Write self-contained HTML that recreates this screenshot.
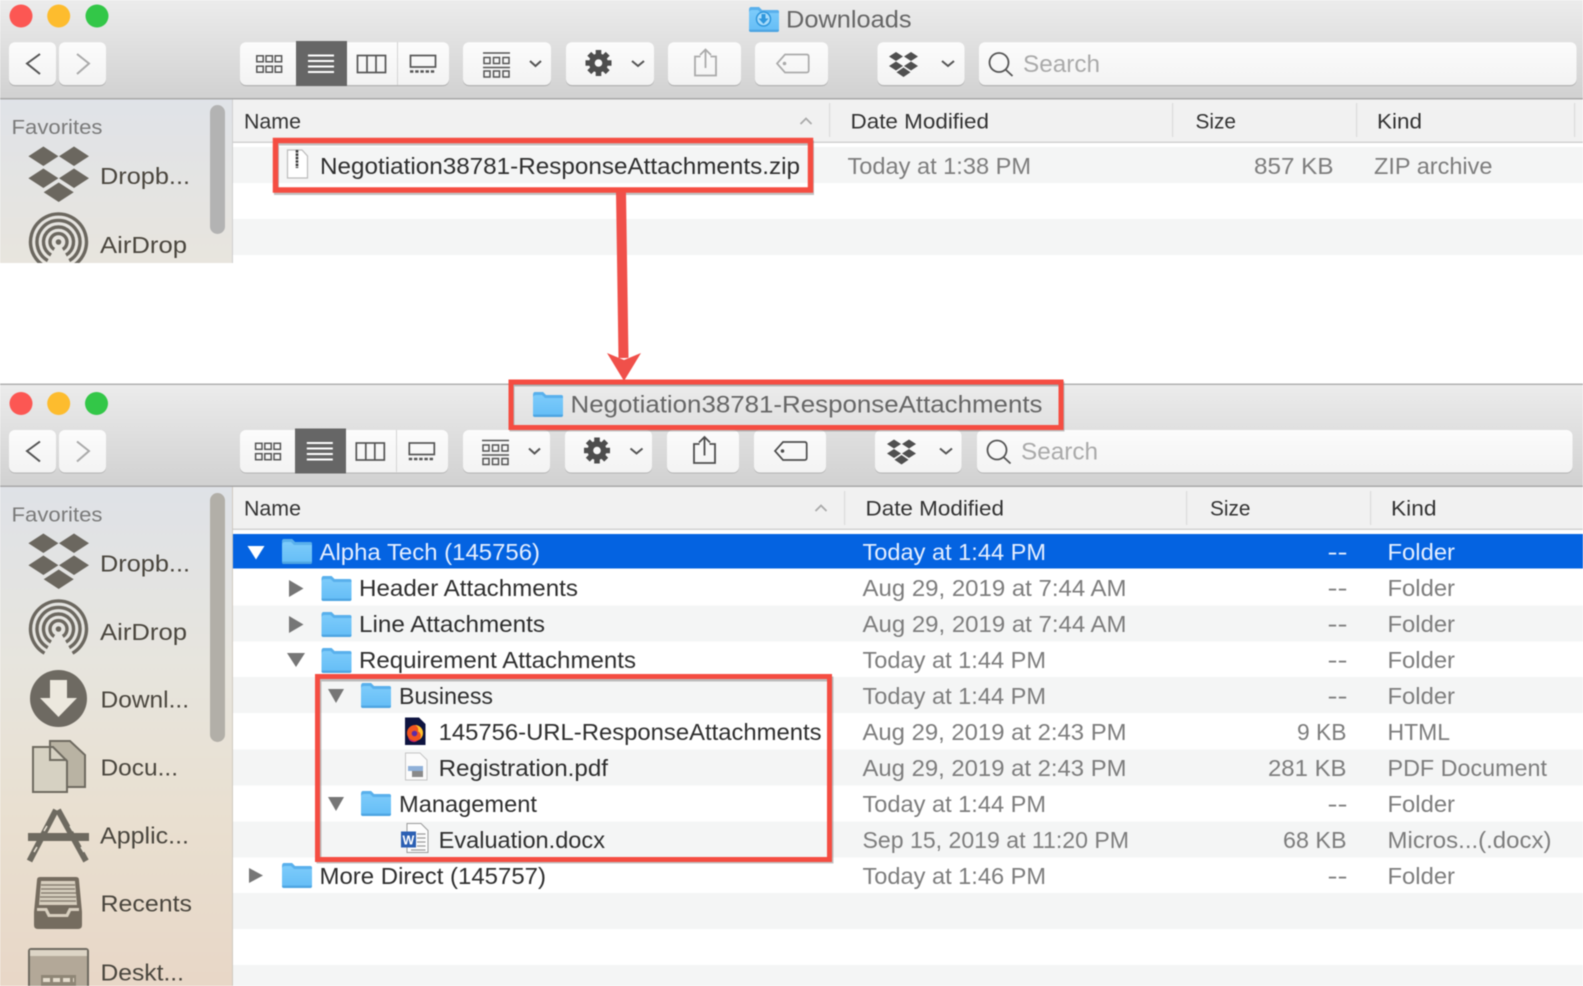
<!DOCTYPE html>
<html><head><meta charset="utf-8"><title>Finder</title>
<style>
html,body{margin:0;padding:0;background:#fff;width:1583px;height:986px;overflow:hidden}
body>svg{display:block;position:absolute;left:0;top:0;filter:blur(.55px)}
text{font-family:"Liberation Sans",sans-serif;white-space:pre}
.r{font-size:23.5px;fill:#2e2e2e}
.d{font-size:23.5px;fill:#7d7d7d}
.w{font-size:23.5px;fill:#e4eeff}
.h{font-size:21.5px;fill:#333}
.s{font-size:23.5px;fill:#4a463e}
.f{font-size:20.5px;fill:#7a7a7a}
.t{font-size:24px;fill:#666}
.q{font-size:24px;fill:#aaa}
</style></head><body>
<svg width="1583" height="986" viewBox="0 0 1583 986" xmlns="http://www.w3.org/2000/svg">
<defs>
<linearGradient id="bar" x1="0" y1="0" x2="0" y2="1"><stop offset="0" stop-color="#ececec"/><stop offset="1" stop-color="#d1d1d1"/></linearGradient>
<linearGradient id="btn" x1="0" y1="0" x2="0" y2="1"><stop offset="0" stop-color="#fcfcfc"/><stop offset="1" stop-color="#f3f3f3"/></linearGradient>
<linearGradient id="sb1" x1="0" y1="0" x2="0" y2="1"><stop offset="0" stop-color="#e0e3e8"/><stop offset="1" stop-color="#e8e5de"/></linearGradient>
<linearGradient id="sb2" x1="0" y1="0" x2="0" y2="1"><stop offset="0" stop-color="#dfe2e7"/><stop offset=".35" stop-color="#e7e5de"/><stop offset=".65" stop-color="#e9e0d1"/><stop offset="1" stop-color="#e8d7c7"/></linearGradient>
<linearGradient id="fold" x1="0" y1="0" x2="0" y2="1"><stop offset="0" stop-color="#80cdfb"/><stop offset="1" stop-color="#64bdf6"/></linearGradient>
<g id="folder">
<path d="M0 4Q0 1 2 1L10 1L13 4L28 4Q30 4 30 6L30 24Q30 26 28 26L2 26Q0 26 0 24Z" fill="url(#fold)"/>
<path d="M0 5Q0 1 2 1L10 1L13 4L28 4Q30 4 30 6L30 7L12 7L9 4L3 4Q0 4 0 7Z" fill="#59b0ec"/>
<path d="M0 24Q0 26 2 26L28 26Q30 26 30 24L30 23.6L0 23.6Z" fill="#4ea5e2"/>
</g>
<g id="box" fill="none" stroke="#555" stroke-width="1.5">
<rect x="256.8" y="55.8" width="6.4" height="6"/><rect x="266" y="55.8" width="6.4" height="6"/><rect x="275.2" y="55.8" width="6.4" height="6"/>
<rect x="256.8" y="66.2" width="6.4" height="6"/><rect x="266" y="66.2" width="6.4" height="6"/><rect x="275.2" y="66.2" width="6.4" height="6"/>
<path d="M308 55.5H334M308 61H334M308 66.5H334M308 72H334" stroke="#fff" stroke-width="2"/>
<rect x="357.5" y="55.5" width="28" height="17" stroke-width="1.7"/><path d="M367 55.5V72.5M376 55.5V72.5" stroke-width="1.7"/>
<rect x="410.5" y="55.5" width="25" height="11.5" stroke-width="1.7"/><path d="M410 71.5H436" stroke-width="2.6" stroke-dasharray="3.4 1.8"/>
</g>
<g id="arr" fill="none" stroke="#555" stroke-width="1.5">
<path d="M483 53H510M483 67.5H510"/>
<rect x="484" y="57.5" width="6" height="6"/><rect x="493.5" y="57.5" width="6" height="6"/><rect x="503" y="57.5" width="6" height="6"/>
<rect x="484" y="71" width="6" height="6"/><rect x="493.5" y="71" width="6" height="6"/><rect x="503" y="71" width="6" height="6"/>
<path d="M530 61L535.5 66L541 61" stroke-width="2"/>
</g>
<g id="gear">
<path d="M598.5 50V76M585.5 63H611.5M589.3 53.8L607.7 72.2M607.7 53.8L589.3 72.2" stroke="#4d4d4d" stroke-width="5.6"/>
<circle cx="598.5" cy="63" r="9.5" fill="#4d4d4d"/>
<circle cx="598.5" cy="63" r="3.8" fill="#f7f7f7"/>
<path d="M632 61L638 66L644 61" fill="none" stroke="#555" stroke-width="2"/>
</g>
<g id="tag"><path d="M806.5 54.5H785L777 63.5L785 72.5H806.5Q808.7 72.5 808.7 70.5V56.5Q808.7 54.5 806.5 54.5Z" fill="none" stroke-width="1.7"/><circle cx="784.5" cy="63.5" r="1.3"/></g>
<g id="share"><path d="M700.5 56.5H695V75.5H716V56.5H710.5M705.5 68V49.5M700 55L705.5 49.5L711 55" fill="none" stroke-width="1.8"/></g>
<g id="dbx" fill="#4f4f4f">
<path d="M896 52L903 56.5L896 61L889 56.5ZM911 52L918 56.5L911 61L904 56.5ZM896 61.5L903 66L896 70.5L889 66ZM911 61.5L918 66L911 70.5L904 66ZM903.5 67.5L910.5 72.3L903.5 77L896.5 72.3Z"/>
<path d="M942 61L948 66L954 61" fill="none" stroke="#555" stroke-width="2"/>
</g>
<g id="mag" fill="none" stroke="#555" stroke-width="1.8"><circle cx="999" cy="62.5" r="9.5"/><path d="M1005.5 69.5L1012.5 76"/></g>
<g id="drop" fill="#6b675f"><path d="M43.4 146.5L58.4 156.2L43.4 166L28.4 156.2ZM74 146.5L89 156.2L74 166L59 156.2ZM43.4 168.5L58.4 178.2L43.4 188L28.4 178.2ZM74 168.5L89 178.2L74 188L59 178.2ZM58.7 182.5L73.7 192.2L58.7 202L43.7 192.2Z"/></g>
<g id="air" fill="none" stroke="#6b675f" stroke-width="3.4">
<path d="M44.5 653.2A28 28 0 1 1 72.5 653.2"/>
<path d="M47.75 647.6A21.5 21.5 0 1 1 69.25 647.6"/>
<path d="M51 642A15 15 0 1 1 66 642"/>
<path d="M54.25 636.4A8.5 8.5 0 1 1 62.75 636.4"/>
<circle cx="58.5" cy="629" r="2.8" fill="#6b675f" stroke="none"/>
</g>
</defs>

<!-- top window -->
<rect width="1583" height="99" fill="url(#bar)"/>
<rect y="98" width="1583" height="1.5" fill="#a9a9a9"/>
<circle cx="21" cy="16" r="11.5" fill="#fc5753"/><circle cx="58.7" cy="16" r="11.5" fill="#fdbc2e"/><circle cx="97" cy="16" r="11.5" fill="#33c748"/>
<use href="#folder" transform="translate(749,6)"/>
<circle cx="763.5" cy="19" r="7" fill="#a8dcfb" stroke="#2f97dd" stroke-width="1.5"/>
<path d="M761.5 14H765.5V18.5H768.5L763.5 24L758.5 18.5H761.5Z" fill="#2f97dd"/>
<text x="786" y="27.5" class="t" textLength="125.5" lengthAdjust="spacingAndGlyphs">Downloads</text>

<g fill="#b4b4b4">
<rect x="9" y="43.2" width="47" height="43" rx="6"/><rect x="59" y="43.2" width="47" height="43" rx="6"/><rect x="240" y="43.2" width="209" height="43" rx="6"/><rect x="463" y="43.2" width="88" height="43" rx="6"/><rect x="566" y="43.2" width="88" height="43" rx="6"/><rect x="668" y="43.2" width="73" height="43" rx="6"/><rect x="755" y="43.2" width="73" height="43" rx="6"/><rect x="877.5" y="43.2" width="87" height="43" rx="6"/><rect x="979" y="43.2" width="597.5" height="43" rx="6"/>
</g>
<g fill="url(#btn)">
<rect x="9" y="42.2" width="47" height="42.8" rx="6"/><rect x="59" y="42.2" width="47" height="42.8" rx="6"/><rect x="240" y="42.2" width="209" height="42.8" rx="6"/><rect x="463" y="42.2" width="88" height="42.8" rx="6"/><rect x="566" y="42.2" width="88" height="42.8" rx="6"/><rect x="668" y="42.2" width="73" height="42.8" rx="6"/><rect x="755" y="42.2" width="73" height="42.8" rx="6"/><rect x="877.5" y="42.2" width="87" height="42.8" rx="6"/><rect x="979" y="42.2" width="597.5" height="42.8" rx="6"/>
</g>
<rect x="296" y="41" width="51" height="45" fill="#666"/>
<rect x="397" y="42" width="1" height="43" fill="#d4d4d4"/>
<path d="M40 54L27 63.5L40 74" fill="none" stroke="#555" stroke-width="2"/>
<path d="M77 54L89 63.5L77 74" fill="none" stroke="#aaa" stroke-width="2"/>
<use href="#box"/><use href="#arr"/><use href="#gear"/>
<use href="#share" stroke="#aaa"/>
<use href="#tag" stroke="#aaa" fill="#aaa"/>
<use href="#dbx"/><use href="#mag"/>
<text x="1023" y="72" class="q" textLength="77" lengthAdjust="spacingAndGlyphs">Search</text>

<!-- top sidebar -->
<rect y="99.5" width="232" height="163.5" fill="url(#sb1)"/>
<rect x="232" y="99.5" width="1" height="163.5" fill="#cfcfcf"/>
<rect x="210" y="105" width="15" height="129" rx="7.5" fill="#b3b3b3"/>
<text x="11.5" y="134" class="f" textLength="91" lengthAdjust="spacingAndGlyphs">Favorites</text>
<use href="#drop"/>
<text x="100" y="184" class="s" textLength="90" lengthAdjust="spacingAndGlyphs">Dropb...</text>
<use href="#air" transform="translate(0,-387)"/>
<rect y="263" width="233" height="30" fill="#fff"/>
<text x="100" y="253" class="s" textLength="87" lengthAdjust="spacingAndGlyphs">AirDrop</text>

<!-- top list -->
<rect x="233" y="99.5" width="1350" height="42" fill="#f1f1f1"/>
<rect x="233" y="141.5" width="1350" height="1.5" fill="#d2d2d2"/>
<rect x="233" y="147" width="1350" height="36" fill="#f4f5f5"/>
<rect x="233" y="219" width="1350" height="36" fill="#f4f5f5"/>
<g fill="#dcdcdc"><rect x="829" y="103" width="1.2" height="34"/><rect x="1172" y="103" width="1.2" height="34"/><rect x="1356" y="103" width="1.2" height="34"/><rect x="1574" y="103" width="1.2" height="34"/></g>
<text x="244" y="128.5" class="h" textLength="57" lengthAdjust="spacingAndGlyphs">Name</text>
<path d="M800.5 124L806 118.5L811.5 124" fill="none" stroke="#aaa" stroke-width="1.8"/>
<text x="850.5" y="128.5" class="h" textLength="138.5" lengthAdjust="spacingAndGlyphs">Date Modified</text>
<text x="1195.5" y="128.5" class="h" textLength="40.5" lengthAdjust="spacingAndGlyphs">Size</text>
<text x="1377" y="128.5" class="h" textLength="45" lengthAdjust="spacingAndGlyphs">Kind</text>
<path d="M287.5 150H302L307.5 156V178H287.5Z" fill="#fff" stroke="#bcbcbc" stroke-width="1.2"/>
<path d="M297 150V168" stroke="#3a3a3a" stroke-width="2.6" stroke-dasharray="2.6 .8"/>
<text x="320" y="174" class="r" textLength="480" lengthAdjust="spacingAndGlyphs">Negotiation38781-ResponseAttachments.zip</text>
<text x="847.5" y="174" class="d" textLength="183.5" lengthAdjust="spacingAndGlyphs">Today at 1:38 PM</text>
<text x="1254" y="174" class="d" textLength="79.5" lengthAdjust="spacingAndGlyphs">857 KB</text>
<text x="1374" y="174" class="d" textLength="118.5" lengthAdjust="spacingAndGlyphs">ZIP archive</text>
<rect x="275.5" y="141.5" width="535" height="49.5" fill="none" stroke="#777" stroke-width="5" opacity=".45" transform="translate(1,1.5)"/>
<rect x="275.5" y="140.5" width="535" height="49.5" fill="none" stroke="#f54d42" stroke-width="5.5"/>

<!-- bottom window -->
<rect y="384" width="1583" height="102" fill="url(#bar)"/>
<rect y="383.5" width="1583" height="1.5" fill="#b0b0b0"/>
<rect y="485.5" width="1583" height="1.5" fill="#a9a9a9"/>
<circle cx="21" cy="403.5" r="11.5" fill="#fc5753"/><circle cx="58.7" cy="403.5" r="11.5" fill="#fdbc2e"/><circle cx="96.5" cy="403.5" r="11.5" fill="#33c748"/>
<g fill="#b4b4b4">
<rect x="9" y="431" width="47" height="42.5" rx="6"/><rect x="59" y="431" width="47" height="42.5" rx="6"/><rect x="240" y="431" width="208" height="42.5" rx="6"/><rect x="463" y="431" width="87" height="42.5" rx="6"/><rect x="565" y="431" width="87" height="42.5" rx="6"/><rect x="667" y="431" width="72" height="42.5" rx="6"/><rect x="754" y="431" width="72" height="42.5" rx="6"/><rect x="875" y="431" width="86.5" height="42.5" rx="6"/><rect x="977" y="431" width="595.5" height="42.5" rx="6"/>
</g>
<g fill="url(#btn)">
<rect x="9" y="430" width="47" height="42.5" rx="6"/><rect x="59" y="430" width="47" height="42.5" rx="6"/><rect x="240" y="430" width="208" height="42.5" rx="6"/><rect x="463" y="430" width="87" height="42.5" rx="6"/><rect x="565" y="430" width="87" height="42.5" rx="6"/><rect x="667" y="430" width="72" height="42.5" rx="6"/><rect x="754" y="430" width="72" height="42.5" rx="6"/><rect x="875" y="430" width="86.5" height="42.5" rx="6"/><rect x="977" y="430" width="595.5" height="42.5" rx="6"/>
</g>
<rect x="295" y="428.5" width="51" height="45" fill="#666"/>
<rect x="396" y="430" width="1" height="42" fill="#d4d4d4"/>
<g transform="translate(0,387.5)">
<path d="M40 54L27 63.5L40 74" fill="none" stroke="#555" stroke-width="2"/>
<path d="M77 54L89 63.5L77 74" fill="none" stroke="#aaa" stroke-width="2"/>
</g>
<use href="#box" transform="translate(-1.2,387.5)"/>
<use href="#arr" transform="translate(-1,387.5)"/>
<use href="#gear" transform="translate(-1.5,387.5)"/>
<use href="#share" stroke="#4d4d4d" transform="translate(-1,387.5)"/>
<use href="#tag" stroke="#4d4d4d" fill="#4d4d4d" transform="translate(-2,387.5)"/>
<use href="#dbx" transform="translate(-2,387.5)"/>
<use href="#mag" transform="translate(-2,387.5)"/>
<text x="1021" y="459.5" class="q" textLength="77" lengthAdjust="spacingAndGlyphs">Search</text>
<use href="#folder" transform="translate(533,391)"/>
<text x="570.5" y="412.5" class="t" textLength="472" lengthAdjust="spacingAndGlyphs">Negotiation38781-ResponseAttachments</text>

<!-- bottom sidebar -->
<rect y="487" width="232" height="499" fill="url(#sb2)"/>
<rect x="232" y="487" width="1" height="499" fill="#cfc9c0"/>
<rect x="210" y="493" width="15" height="249" rx="7.5" fill="#b2afa8"/>
<text x="11.5" y="521.5" class="f" textLength="91" lengthAdjust="spacingAndGlyphs">Favorites</text>
<use href="#drop" transform="translate(0,387)"/>
<text x="100" y="571.5" class="s" textLength="90" lengthAdjust="spacingAndGlyphs">Dropb...</text>
<use href="#air"/>
<text x="100" y="640" class="s" textLength="87" lengthAdjust="spacingAndGlyphs">AirDrop</text>
<circle cx="58.5" cy="698.5" r="28.5" fill="#6e6a62"/>
<path d="M50 680H67V698H77L58.5 717L40 698H50Z" fill="#ece8de"/>
<text x="100.5" y="707.5" class="s" textLength="88.5" lengthAdjust="spacingAndGlyphs">Downl...</text>
<path d="M50 741H70L85 755V787H50Z" fill="#b9b3a3" stroke="#6e6a60" stroke-width="2"/>
<path d="M33 747H53L67 761V792H33Z" fill="#d6d1c2" stroke="#6e6a60" stroke-width="2"/>
<path d="M50 741V760H67" fill="none" stroke="#6e6a60" stroke-width="2"/>
<text x="100.5" y="775.5" class="s" textLength="77.5" lengthAdjust="spacingAndGlyphs">Docu...</text>
<path d="M56 810L29.5 861M58 810L86 861" stroke="#6e6a60" stroke-width="6" fill="none"/>
<path d="M47 826L44 831M70 826L73 831M37 847L34 852M81 847L84 852" stroke="#e9e2d4" stroke-width="1.6"/>
<rect x="28" y="833" width="61" height="8" fill="#6e6a60"/>
<text x="100" y="843.5" class="s" textLength="89" lengthAdjust="spacingAndGlyphs">Applic...</text>
<path d="M40 877H76Q79 877 79 880L82 912V925Q82 929 78 929H38Q34 929 34 925V912L37 880Q37 877 40 877Z" fill="#756c5f"/>
<path d="M41 881H75L77 905H39Z" fill="#d8cfbf"/>
<path d="M41 885H75M41 889H75M41 893H76M40 897H76M40 901H76" stroke="#8a8173" stroke-width="1.5"/>
<path d="M37 908H47L50 914H66L69 908H79V911H71L68 917H48L45 911H37Z" fill="#d8cfbf"/>
<text x="100.5" y="911.5" class="s" textLength="91.5" lengthAdjust="spacingAndGlyphs">Recents</text>
<rect x="29" y="949" width="59" height="45" rx="2" fill="#b3a898" stroke="#6e6a60" stroke-width="2"/>
<rect x="30" y="950" width="57" height="6" fill="#ddd5c6"/>
<rect x="41" y="975" width="35" height="12" fill="#8f8676"/>
<path d="M43 980H74" stroke="#e4dccd" stroke-width="4" stroke-dasharray="7 3"/>
<text x="100.5" y="980.5" class="s" textLength="83.5" lengthAdjust="spacingAndGlyphs">Deskt...</text>

<!-- bottom list -->
<rect x="233" y="487" width="1350" height="41.5" fill="#f1f1f1"/>
<rect x="233" y="528.5" width="1350" height="1.5" fill="#d2d2d2"/>
<g fill="#dcdcdc"><rect x="844" y="491" width="1.2" height="34"/><rect x="1186" y="491" width="1.2" height="34"/><rect x="1370" y="491" width="1.2" height="34"/></g>
<text x="244" y="515.5" class="h" textLength="57" lengthAdjust="spacingAndGlyphs">Name</text>
<path d="M815.5 511L821 505.5L826.5 511" fill="none" stroke="#aaa" stroke-width="1.8"/>
<text x="865.5" y="515.5" class="h" textLength="138.5" lengthAdjust="spacingAndGlyphs">Date Modified</text>
<text x="1210" y="515.5" class="h" textLength="40.5" lengthAdjust="spacingAndGlyphs">Size</text>
<text x="1391" y="515.5" class="h" textLength="45.5" lengthAdjust="spacingAndGlyphs">Kind</text>

<g fill="#f4f5f5">
<rect x="233" y="605.5" width="1350" height="36"/>
<rect x="233" y="677" width="1350" height="36"/>
<rect x="233" y="749.5" width="1350" height="36"/>
<rect x="233" y="821.5" width="1350" height="36"/>
<rect x="233" y="893" width="1350" height="36"/>
<rect x="233" y="965" width="1350" height="21"/>
</g>
<rect x="233" y="534" width="1350" height="34.5" fill="#0463e1"/>

<!-- row triangles -->
<path d="M247.5 546H264.5L256 559.5Z" fill="#fff"/>
<g fill="#767676">
<path d="M289 580V597L303.5 588.5Z"/>
<path d="M289 616V633L303.5 624.5Z"/>
<path d="M287 653H305L296 667Z"/>
<path d="M328 689H344L336 703Z"/>
<path d="M328 797H344L336 811Z"/>
<path d="M249 868V883L263 875.5Z"/>
</g>
<use href="#folder" transform="translate(282,538)"/>
<use href="#folder" transform="translate(321.5,575)"/>
<use href="#folder" transform="translate(321.5,611)"/>
<use href="#folder" transform="translate(321.5,647)"/>
<use href="#folder" transform="translate(361,682)"/>
<use href="#folder" transform="translate(361,790)"/>
<use href="#folder" transform="translate(282,862)"/>

<!-- file icons -->
<path d="M405 717.5H419L425.5 724V745H405Z" fill="#0e1440"/>
<circle cx="415" cy="733" r="8" fill="#f2541f"/>
<path d="M415 725a8 8 0 0 1 8 8a8 8 0 0 1-5 7.4a5 5 0 0 0 0-9a5 5 0 0 0-3-6.4Z" fill="#ffc42e"/>
<path d="M408 737a8 8 0 0 0 7 4a8 8 0 0 0 3-.6a6 6 0 0 1-10-3.4Z" fill="#d9207a"/>
<circle cx="414.5" cy="733.5" r="2.8" fill="#5b2ca8"/>
<path d="M405.5 753H420L427 760V780H405.5Z" fill="#fbfbfb" stroke="#c5c5c5"/>
<rect x="408" y="766" width="15" height="5" fill="#8fb0d8"/><rect x="412" y="771" width="11" height="6" fill="#8a8a8a"/>
<path d="M407 823.5H421L428 830.5V852.5H407Z" fill="#fdfdfd" stroke="#9a9a9a"/>
<path d="M417 834H425.5M417 838H425.5M417 842H425.5M417 846H425.5M411 850H425.5" stroke="#9a9a9a" stroke-width="1.2"/>
<rect x="401" y="831.5" width="15" height="16" fill="#2b5fb3"/>
<text x="402.5" y="844.5" style="font-size:12.5px;font-weight:bold;fill:#fff">W</text>

<!-- row text -->
<text x="319.5" y="560" class="w" textLength="220.5" lengthAdjust="spacingAndGlyphs">Alpha Tech (145756)</text>
<text x="862.5" y="560" class="w" textLength="183.5" lengthAdjust="spacingAndGlyphs">Today at 1:44 PM</text>
<text x="1327.5" y="560" class="w" textLength="20" lengthAdjust="spacingAndGlyphs">--</text>
<text x="1387.5" y="560" class="w" textLength="67.5" lengthAdjust="spacingAndGlyphs">Folder</text>

<text x="359" y="596" class="r" textLength="219" lengthAdjust="spacingAndGlyphs">Header Attachments</text>
<text x="862.5" y="596" class="d" textLength="264" lengthAdjust="spacingAndGlyphs">Aug 29, 2019 at 7:44 AM</text>
<text x="1327.5" y="596" class="d" textLength="20" lengthAdjust="spacingAndGlyphs">--</text>
<text x="1387.5" y="596" class="d" textLength="67.5" lengthAdjust="spacingAndGlyphs">Folder</text>

<text x="359" y="632" class="r" textLength="186" lengthAdjust="spacingAndGlyphs">Line Attachments</text>
<text x="862.5" y="632" class="d" textLength="264" lengthAdjust="spacingAndGlyphs">Aug 29, 2019 at 7:44 AM</text>
<text x="1327.5" y="632" class="d" textLength="20" lengthAdjust="spacingAndGlyphs">--</text>
<text x="1387.5" y="632" class="d" textLength="67.5" lengthAdjust="spacingAndGlyphs">Folder</text>

<text x="359" y="668" class="r" textLength="277" lengthAdjust="spacingAndGlyphs">Requirement Attachments</text>
<text x="862.5" y="668" class="d" textLength="183.5" lengthAdjust="spacingAndGlyphs">Today at 1:44 PM</text>
<text x="1327.5" y="668" class="d" textLength="20" lengthAdjust="spacingAndGlyphs">--</text>
<text x="1387.5" y="668" class="d" textLength="67.5" lengthAdjust="spacingAndGlyphs">Folder</text>

<text x="399" y="704" class="r" textLength="94" lengthAdjust="spacingAndGlyphs">Business</text>
<text x="862.5" y="704" class="d" textLength="183.5" lengthAdjust="spacingAndGlyphs">Today at 1:44 PM</text>
<text x="1327.5" y="704" class="d" textLength="20" lengthAdjust="spacingAndGlyphs">--</text>
<text x="1387.5" y="704" class="d" textLength="67.5" lengthAdjust="spacingAndGlyphs">Folder</text>

<text x="438.6" y="740" class="r" textLength="383" lengthAdjust="spacingAndGlyphs">145756-URL-ResponseAttachments</text>
<text x="862.5" y="740" class="d" textLength="264" lengthAdjust="spacingAndGlyphs">Aug 29, 2019 at 2:43 PM</text>
<text x="1297" y="740" class="d" textLength="49.5" lengthAdjust="spacingAndGlyphs">9 KB</text>
<text x="1387.5" y="740" class="d" textLength="62.5" lengthAdjust="spacingAndGlyphs">HTML</text>

<text x="438.6" y="776" class="r" textLength="169.4" lengthAdjust="spacingAndGlyphs">Registration.pdf</text>
<text x="862.5" y="776" class="d" textLength="264" lengthAdjust="spacingAndGlyphs">Aug 29, 2019 at 2:43 PM</text>
<text x="1268" y="776" class="d" textLength="78.5" lengthAdjust="spacingAndGlyphs">281 KB</text>
<text x="1387.5" y="776" class="d" textLength="159.5" lengthAdjust="spacingAndGlyphs">PDF Document</text>

<text x="399" y="812" class="r" textLength="138" lengthAdjust="spacingAndGlyphs">Management</text>
<text x="862.5" y="812" class="d" textLength="183.5" lengthAdjust="spacingAndGlyphs">Today at 1:44 PM</text>
<text x="1327.5" y="812" class="d" textLength="20" lengthAdjust="spacingAndGlyphs">--</text>
<text x="1387.5" y="812" class="d" textLength="67.5" lengthAdjust="spacingAndGlyphs">Folder</text>

<text x="438.6" y="848" class="r" textLength="166.4" lengthAdjust="spacingAndGlyphs">Evaluation.docx</text>
<text x="862.5" y="848" class="d" textLength="266.5" lengthAdjust="spacingAndGlyphs">Sep 15, 2019 at 11:20 PM</text>
<text x="1283" y="848" class="d" textLength="63.5" lengthAdjust="spacingAndGlyphs">68 KB</text>
<text x="1387.5" y="848" class="d" textLength="164" lengthAdjust="spacingAndGlyphs">Micros...(.docx)</text>

<text x="319.5" y="884" class="r" textLength="226.5" lengthAdjust="spacingAndGlyphs">More Direct (145757)</text>
<text x="862.5" y="884" class="d" textLength="183.5" lengthAdjust="spacingAndGlyphs">Today at 1:46 PM</text>
<text x="1327.5" y="884" class="d" textLength="20" lengthAdjust="spacingAndGlyphs">--</text>
<text x="1387.5" y="884" class="d" textLength="67.5" lengthAdjust="spacingAndGlyphs">Folder</text>

<!-- red annotation boxes -->
<rect x="318" y="677.5" width="512" height="182" fill="none" stroke="#777" stroke-width="5" opacity=".45" transform="translate(1,1.5)"/>
<rect x="317.5" y="676.5" width="512" height="183" fill="none" stroke="#f54d42" stroke-width="5"/>
<rect x="511" y="382.5" width="550" height="45" fill="none" stroke="#777" stroke-width="5" opacity=".45" transform="translate(1,1.5)"/>
<rect x="511" y="382" width="550" height="45.5" fill="none" stroke="#f54d42" stroke-width="5"/>

<!-- arrow -->
<path d="M621 192L623.5 358" stroke="#f0504a" stroke-width="10" fill="none"/>
<path d="M607 353L624 360L641 353L624 381Z" fill="#f0504a"/>
</svg>
</body></html>
